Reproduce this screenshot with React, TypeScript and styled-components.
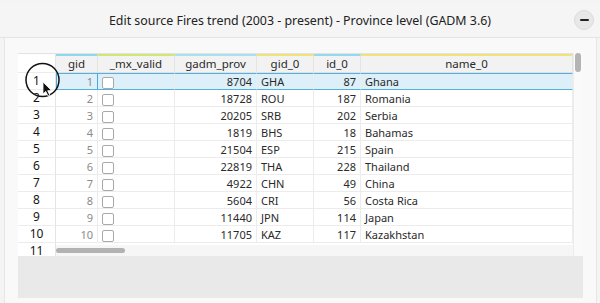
import React from "react";
import styled, { createGlobalStyle } from "styled-components";

const Global = createGlobalStyle`
  html, body { margin: 0; padding: 0; }
  body {
    background: #f4f4f4;
    font-family: "Noto Sans", "Open Sans", sans-serif;
    color: #333;
    width: 600px;
    height: 303px;
    overflow: hidden;
  }
`;

const Window = styled.div`
  box-sizing: border-box;
  width: 600px;
  height: 303px;
  padding-top: 3px;
  display: flex;
  flex-direction: column;
`;

const TitleBar = styled.div`
  height: 34px;
  flex: none;
  display: flex;
  align-items: center;
  justify-content: center;
  position: relative;
  background: #f5f5f5;
  border-bottom: 1px solid #e4e4e4;
`;

const Title = styled.div`
  font-size: 12.4px;
  color: #222;
  letter-spacing: 0;
`;

const MinButton = styled.div`
  position: absolute;
  right: 6px;
  top: 7px;
  width: 18px;
  height: 18px;
  border-radius: 50%;
  background: #e8e8e8;
  border: 1px solid #dcdcdc;
  display: flex;
  align-items: center;
  justify-content: center;
  &::after {
    content: "";
    width: 9px;
    height: 2px;
    border-radius: 1px;
    background: #222;
  }
`;

const Body = styled.div`
  flex: 1;
  margin: 0 3px 0 4px;
  border-left: 1px solid #e6e6e6;
  border-right: 1px solid #e6e6e6;
  background: #f9f9f9;
  padding: 15px 0 0 13px;
  display: flex;
  flex-direction: column;
`;

const GridPanel = styled.div`
  width: 565px;
  display: flex;
  flex-direction: column;
  background: #fff;
`;

const GridTop = styled.div`
  display: flex;
  height: 203px;
`;

const Viewport = styled.div`
  position: relative;
  width: 555px;
  height: 203px;
  overflow: hidden;
  border-top: 1px solid #e2e2e2;
  box-sizing: border-box;
`;

const VScroll = styled.div`
  width: 10px;
  background: #fafafa;
  border-left: 1px solid #ececec;
  box-sizing: border-box;
  padding: 0 0 0 1px;
`;

const VThumb = styled.div`
  width: 6px;
  height: 19px;
  border-radius: 3px;
  background: #b4b4b4;
`;

const Row = styled.div<{ $header?: boolean }>`
  display: flex;
  height: ${(p) => (p.$header ? 19 : 17)}px;
  font-size: 11px;
  line-height: 1;
`;

const RowNum = styled.div`
  width: 38px;
  flex: none;
  box-sizing: border-box;
  border-right: 1px solid #e4e4e4;
  border-bottom: 1px solid #ececec;
  background: #fff;
  display: flex;
  align-items: center;
  justify-content: center;
  color: #151515;
  font-size: 12px;
  font-weight: 400;
`;

const HeadCell = styled.div<{ $w: number; $line: string }>`
  width: ${(p) => p.$w}px;
  flex: none;
  box-sizing: border-box;
  border-top: 2px solid ${(p) => p.$line};
  border-right: 1px solid #e4e4e4;
  border-bottom: 1px solid #e0e0e0;
  background: #f2f2f2;
  display: flex;
  align-items: center;
  justify-content: center;
  color: #2a2a2a;
  font-size: 11.5px;
  padding-bottom: 1px;
`;

const Cell = styled.div<{
  $w: number;
  $align?: "left" | "right";
  $muted?: boolean;
  $selected?: boolean;
  $focus?: boolean;
}>`
  width: ${(p) => p.$w}px;
  flex: none;
  box-sizing: border-box;
  border-right: 1px solid ${(p) => (p.$focus ? "#4aa8dc" : "#ececec")};
  border-left: ${(p) => (p.$focus ? "1px solid #4aa8dc" : "none")};
  border-top: ${(p) => (p.$selected ? "1px solid #55b0e0" : "none")};
  border-bottom: 1px solid ${(p) => (p.$selected ? "#55b0e0" : "#ececec")};
  background: ${(p) => (p.$selected ? "#ddf0f9" : "#fff")};
  display: flex;
  align-items: center;
  justify-content: ${(p) => (p.$align === "right" ? "flex-end" : "flex-start")};
  padding: 0 4px;
  color: ${(p) => (p.$muted ? "#8a8a8a" : "#2a2a2a")};
  white-space: nowrap;
  overflow: hidden;
`;

const Check = styled.span`
  display: inline-block;
  width: 10px;
  height: 10px;
  margin-top: 3px;
  border: 1px solid #a9a9a9;
  border-radius: 2px;
  background: #fff;
`;

const HScroll = styled.div`
  position: absolute;
  left: 38px;
  right: 0;
  bottom: 0;
  height: 11px;
  background: #f6f6f6;
  display: flex;
  align-items: center;
`;

const HThumb = styled.div`
  width: 69px;
  height: 5px;
  border-radius: 3px;
  background: #b2b2b2;
`;

const Footer = styled.div`
  height: 42px;
  background: #e9e9e9;
`;

const Cursor = styled.svg`
  position: absolute;
  left: 7px;
  top: 44px;
`;

const COLS = [
  { key: "gid", w: 42, line: "#8fd8ee" },
  { key: "_mx_valid", w: 77, line: "#cfe873" },
  { key: "gadm_prov", w: 82, line: "#a8e0f0" },
  { key: "gid_0", w: 57, line: "#f0e479" },
  { key: "id_0", w: 47, line: "#92d8ee" },
  { key: "name_0", w: 212, line: "#f0e479" },
];

const DATA: [number, number, string, number, string][] = [
  [1, 8704, "GHA", 87, "Ghana"],
  [2, 18728, "ROU", 187, "Romania"],
  [3, 20205, "SRB", 202, "Serbia"],
  [4, 1819, "BHS", 18, "Bahamas"],
  [5, 21504, "ESP", 215, "Spain"],
  [6, 22819, "THA", 228, "Thailand"],
  [7, 4922, "CHN", 49, "China"],
  [8, 5604, "CRI", 56, "Costa Rica"],
  [9, 11440, "JPN", 114, "Japan"],
  [10, 11705, "KAZ", 117, "Kazakhstan"],
];

export default function App() {
  return (
    <>
      <Global />
      <Window>
        <TitleBar>
          <Title>Edit source Fires trend (2003 - present) - Province level (GADM 3.6)</Title>
          <MinButton />
        </TitleBar>
        <Body>
          <GridPanel>
            <GridTop>
              <Viewport>
                <Row $header>
                  <RowNum />
                  {COLS.map((c) => (
                    <HeadCell key={c.key} $w={c.w} $line={c.line}>
                      {c.key}
                    </HeadCell>
                  ))}
                </Row>
                {DATA.map((r, i) => {
                  const sel = i === 0;
                  return (
                    <Row key={r[0]}>
                      <RowNum>{r[0]}</RowNum>
                      <Cell $w={42} $align="right" $muted $selected={sel} $focus={sel}>
                        {r[0]}
                      </Cell>
                      <Cell $w={77} $selected={sel}>
                        <Check />
                      </Cell>
                      <Cell $w={82} $align="right" $selected={sel}>
                        {r[1]}
                      </Cell>
                      <Cell $w={57} $selected={sel}>
                        {r[2]}
                      </Cell>
                      <Cell $w={47} $align="right" $selected={sel}>
                        {r[3]}
                      </Cell>
                      <Cell $w={212} $selected={sel}>
                        {r[4]}
                      </Cell>
                    </Row>
                  );
                })}
                <Row>
                  <RowNum>11</RowNum>
                </Row>
                <HScroll>
                  <HThumb />
                </HScroll>
              </Viewport>
              <VScroll>
                <VThumb />
              </VScroll>
            </GridTop>
            <Footer />
          </GridPanel>
        </Body>
      </Window>
      <Cursor width="60" height="60" viewBox="0 0 60 60">
        <circle cx="35.5" cy="36" r="16.5" fill="none" stroke="#111" strokeWidth="1.5" />
        <path d="M36 38 L36 50 L38.8 47.4 L41 52 L42.8 51.2 L40.7 46.7 L44.5 46.5 Z" fill="#111" stroke="#fff" strokeWidth="0.8" />
      </Cursor>
    </>
  );
}
